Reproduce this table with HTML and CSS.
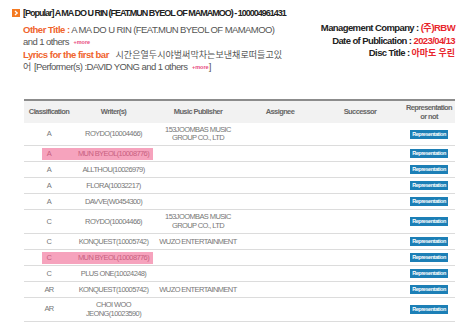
FILE: index.html
```html
<!DOCTYPE html>
<html lang="en">
<head>
<meta charset="utf-8">
<title>A MA DO U RIN</title>
<link rel="stylesheet" href="styles.css">
</head>
<body>
<div class="page">
  <div class="title">
    <svg class="ico" width="8" height="8" viewBox="0 0 8 8"><rect width="8" height="8" fill="#f47a22"/><path d="M3 2 L5.2 4 L3 6" fill="none" stroke="#fff" stroke-width="1.3"/></svg>
    <span>[Popular] A MA DO U RIN (FEAT.MUN BYEOL OF MAMAMOO) - 100004961431</span>
  </div>
  <div class="info">
    <div class="left">
      <span class="lbl">Other Title :</span><span class="txt"> A MA DO U RIN (FEAT.MUN BYEOL OF MAMAMOO)</span><br>
      <span class="txt">and 1 others</span> <span class="more">+more</span><br>
      <span class="lbl">Lyrics for the first bar</span> <span class="ko lyric">시간은열두시야벌써막차는보낸채로떠들고있</span><br>
      <span class="ko">어</span> <span class="txt">[Performer(s) :DAVID YONG and 1 others</span> <span class="more">+more</span>]
    </div>
    <div class="right">
      Management Company : <span class="val">(<span class="ko">주</span>)RBW</span><br>
      Date of Publication : <span class="val">2023/04/13</span><br>
      Disc Title : <span class="val ko">아마도 우린</span>
    </div>
  </div>
  <table class="rights">
    <colgroup><col class="c1"><col class="c2"><col class="c3"><col class="c4"><col class="c5"><col class="c6"></colgroup>
    <thead>
      <tr><th>Classification</th><th>Writer(s)</th><th>Music Publisher</th><th>Assignee</th><th>Successor</th><th>Representation<br>or not</th></tr>
    </thead>
    <tbody>
      <tr><td>A</td><td>ROYDO(10004466)</td><td>153JOOMBAS MUSIC<br>GROUP CO., LTD</td><td></td><td></td><td><span class="btn">Representation</span></td></tr>
      <tr><td class="hl-c">A</td><td class="hl-w">MUN BYEOL(10008776)</td><td></td><td></td><td></td><td><span class="btn">Representation</span></td></tr>
      <tr><td>A</td><td>ALLTHOU(10026979)</td><td></td><td></td><td></td><td><span class="btn">Representation</span></td></tr>
      <tr><td>A</td><td>FLORA(10032217)</td><td></td><td></td><td></td><td><span class="btn">Representation</span></td></tr>
      <tr><td>A</td><td>DAVVE(W0454300)</td><td></td><td></td><td></td><td><span class="btn">Representation</span></td></tr>
      <tr><td>C</td><td>ROYDO(10004466)</td><td>153JOOMBAS MUSIC<br>GROUP CO., LTD</td><td></td><td></td><td><span class="btn">Representation</span></td></tr>
      <tr><td>C</td><td>KONQUEST(10005742)</td><td>WUZO ENTERTAINMENT</td><td></td><td></td><td><span class="btn">Representation</span></td></tr>
      <tr><td class="hl-c">C</td><td class="hl-w">MUN BYEOL(10008776)</td><td></td><td></td><td></td><td><span class="btn">Representation</span></td></tr>
      <tr><td>C</td><td>PLUS ONE(10024248)</td><td></td><td></td><td></td><td><span class="btn">Representation</span></td></tr>
      <tr><td>AR</td><td>KONQUEST(10005742)</td><td>WUZO ENTERTAINMENT</td><td></td><td></td><td><span class="btn">Representation</span></td></tr>
      <tr><td>AR</td><td>CHOI WOO<br>JEONG(10023590)</td><td></td><td></td><td></td><td><span class="btn">Representation</span></td></tr>
    </tbody>
  </table>
</div>
</body>
</html>
```
FILE: styles.css
```css
* { box-sizing: border-box; }
body {
  margin: 0;
  background: #fff;
  font-family: "Liberation Sans", Arial, "Noto Sans CJK KR", sans-serif;
  color: #555;
}
.page { padding: 6px 19px 0 12px; }
.title {
  display: flex;
  align-items: center;
  gap: 3px;
  height: 14px;
  font-size: 9px;
  font-weight: bold;
  color: #222;
  letter-spacing: -1px;
  white-space: nowrap;
}
.ico { display: block; flex: none; }
.info {
  display: flex;
  justify-content: space-between;
  align-items: flex-start;
  margin-top: 4px;
}
.left {
  padding-left: 11px;
  font-size: 9.5px;
  line-height: 12.4px;
  color: #555;
  white-space: nowrap;
}
.txt { letter-spacing: -0.58px; }
.lbl { color: #f0642d; font-weight: bold; letter-spacing: -0.5px; }
.ko {
  font-family: "Noto Sans CJK KR", sans-serif;
  font-size: 9px;
  letter-spacing: 0;
}
.lyric { margin-left: 4px; letter-spacing: 0.05px; }
.more {
  font-size: 5.5px;
  font-weight: bold;
  letter-spacing: 0;
  color: #e84a80;
  margin-left: 2px;
  vertical-align: 1px;
}
.right {
  margin-top: -2px;
  text-align: right;
  font-size: 9.5px;
  letter-spacing: -0.6px;
  line-height: 12.5px;
  font-weight: bold;
  color: #222;
  white-space: nowrap;
}
.right .ko { letter-spacing: 0; }
.val { color: #e8262d; }
.rights {
  margin: 25px 0 0 12px;
  width: 431px;
  border-collapse: collapse;
  table-layout: fixed;
  border-top: 2px solid #8c8c8c;
  font-size: 7.5px;
  letter-spacing: -0.6px;
}
.c1 { width: 50px; }
.c2 { width: 79px; }
.c3 { width: 90px; }
.c4 { width: 74px; }
.c5 { width: 86px; }
.c6 { width: 52px; }
.rights th {
  background: #f2f2f2;
  color: #666;
  font-weight: bold;
  line-height: 9px;
  padding: 2px;
  height: 22px;
}
.rights td {
  text-align: center;
  color: #777;
  line-height: 8.4px;
  padding: 3px 2px;
  border-bottom: 1px solid #dcdcdc;
  vertical-align: middle;
  white-space: nowrap;
}
.btn {
  display: inline-block;
  vertical-align: middle;
  background: #1c7fb6;
  color: #fff;
  font-size: 5.5px;
  font-weight: bold;
  letter-spacing: -0.45px;
  height: 9px;
  line-height: 9px;
  padding: 0 2.5px;
}
.rights td.hl-c {
  background: linear-gradient(#f6a3bd, #f6a3bd) right center / 32px 12px no-repeat;
  color: #c85f80;
}
.rights td.hl-w {
  background: linear-gradient(#f6a3bd, #f6a3bd) center / 100% 12px no-repeat;
  color: #c85f80;
}
```
